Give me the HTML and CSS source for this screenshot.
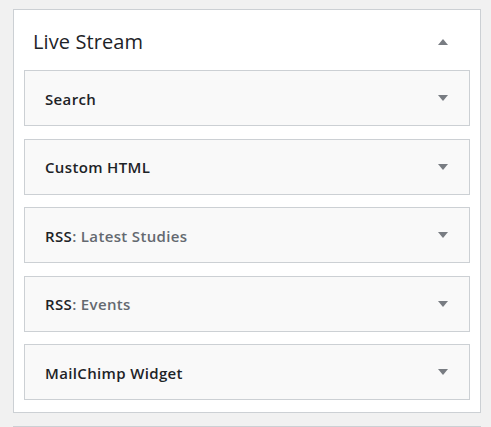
FILE: index.html
```html
<!DOCTYPE html>
<html lang="en">
<head>
<meta charset="utf-8">
<title>Widgets</title>
<link rel="stylesheet" href="styles.css">
</head>
<body>
  <div class="sidebars">
    <section class="sidebar">
      <header class="sidebar-head">
        <h2 class="sidebar-title">Live Stream</h2>
        <svg class="toggle" width="10" height="6" viewBox="0 0 10 6"><path d="M0 6 L5 0 L10 6 Z"/></svg>
      </header>
      <div class="widgets">
        <div class="widget">
          <h3 class="widget-title">Search</h3>
          <svg class="toggle" width="10" height="6" viewBox="0 0 10 6"><path d="M0 0 L10 0 L5 6 Z"/></svg>
        </div>
        <div class="widget">
          <h3 class="widget-title">Custom HTML</h3>
          <svg class="toggle" width="10" height="6" viewBox="0 0 10 6"><path d="M0 0 L10 0 L5 6 Z"/></svg>
        </div>
        <div class="widget">
          <h3 class="widget-title">RSS<span class="in-title">: Latest Studies</span></h3>
          <svg class="toggle" width="10" height="6" viewBox="0 0 10 6"><path d="M0 0 L10 0 L5 6 Z"/></svg>
        </div>
        <div class="widget">
          <h3 class="widget-title">RSS<span class="in-title">: Events</span></h3>
          <svg class="toggle" width="10" height="6" viewBox="0 0 10 6"><path d="M0 0 L10 0 L5 6 Z"/></svg>
        </div>
        <div class="widget">
          <h3 class="widget-title">MailChimp Widget</h3>
          <svg class="toggle" width="10" height="6" viewBox="0 0 10 6"><path d="M0 0 L10 0 L5 6 Z"/></svg>
        </div>
      </div>
    </section>
    <section class="sidebar sidebar-next"></section>
  </div>
</body>
</html>
```

FILE: styles.css
```css
html, body {
  margin: 0;
  padding: 0;
  background: #f1f1f1;
  font-family: "Open Sans", "Noto Sans", sans-serif;
  color: #1d2327;
  overflow: hidden;
}

.sidebars {
  padding: 9px 0 0 13px;
  width: 468px;
  display: flex;
  flex-direction: column;
  gap: 13px;
}

.sidebar {
  background: #fff;
  border: 1px solid #ccd0d4;
  padding: 0 10px 12px;
}

/* next sidebar, only its top edge shows */
.sidebar-next {
  height: 0;
  padding: 0;
  border-bottom: 0;
}

.sidebar-head {
  height: 60px;
  display: flex;
  align-items: center;
  justify-content: space-between;
  padding: 0 22px 0 9px;
}

.sidebar-title {
  margin: 0;
  font-size: 20px;
  font-weight: 400;
  line-height: 1;
  padding-top: 3px;
  letter-spacing: 0.1px;
}

.toggle {
  display: block;
  fill: #787c82;
}

.sidebar-head .toggle {
  margin-top: 3px;
}

.widgets {
  display: flex;
  flex-direction: column;
  gap: 12.5px;
}

.widget {
  height: 54px;
  background: #f9f9f9;
  border: 1px solid #ccd0d4;
  display: flex;
  align-items: center;
  justify-content: space-between;
  padding: 0 21px 0 20px;
}

.widget-title {
  margin: 0;
  font-size: 15px;
  font-weight: 600;
  line-height: 1;
  padding-top: 2px;
  letter-spacing: 0.35px;
}

.in-title {
  color: #646970;
}
```
